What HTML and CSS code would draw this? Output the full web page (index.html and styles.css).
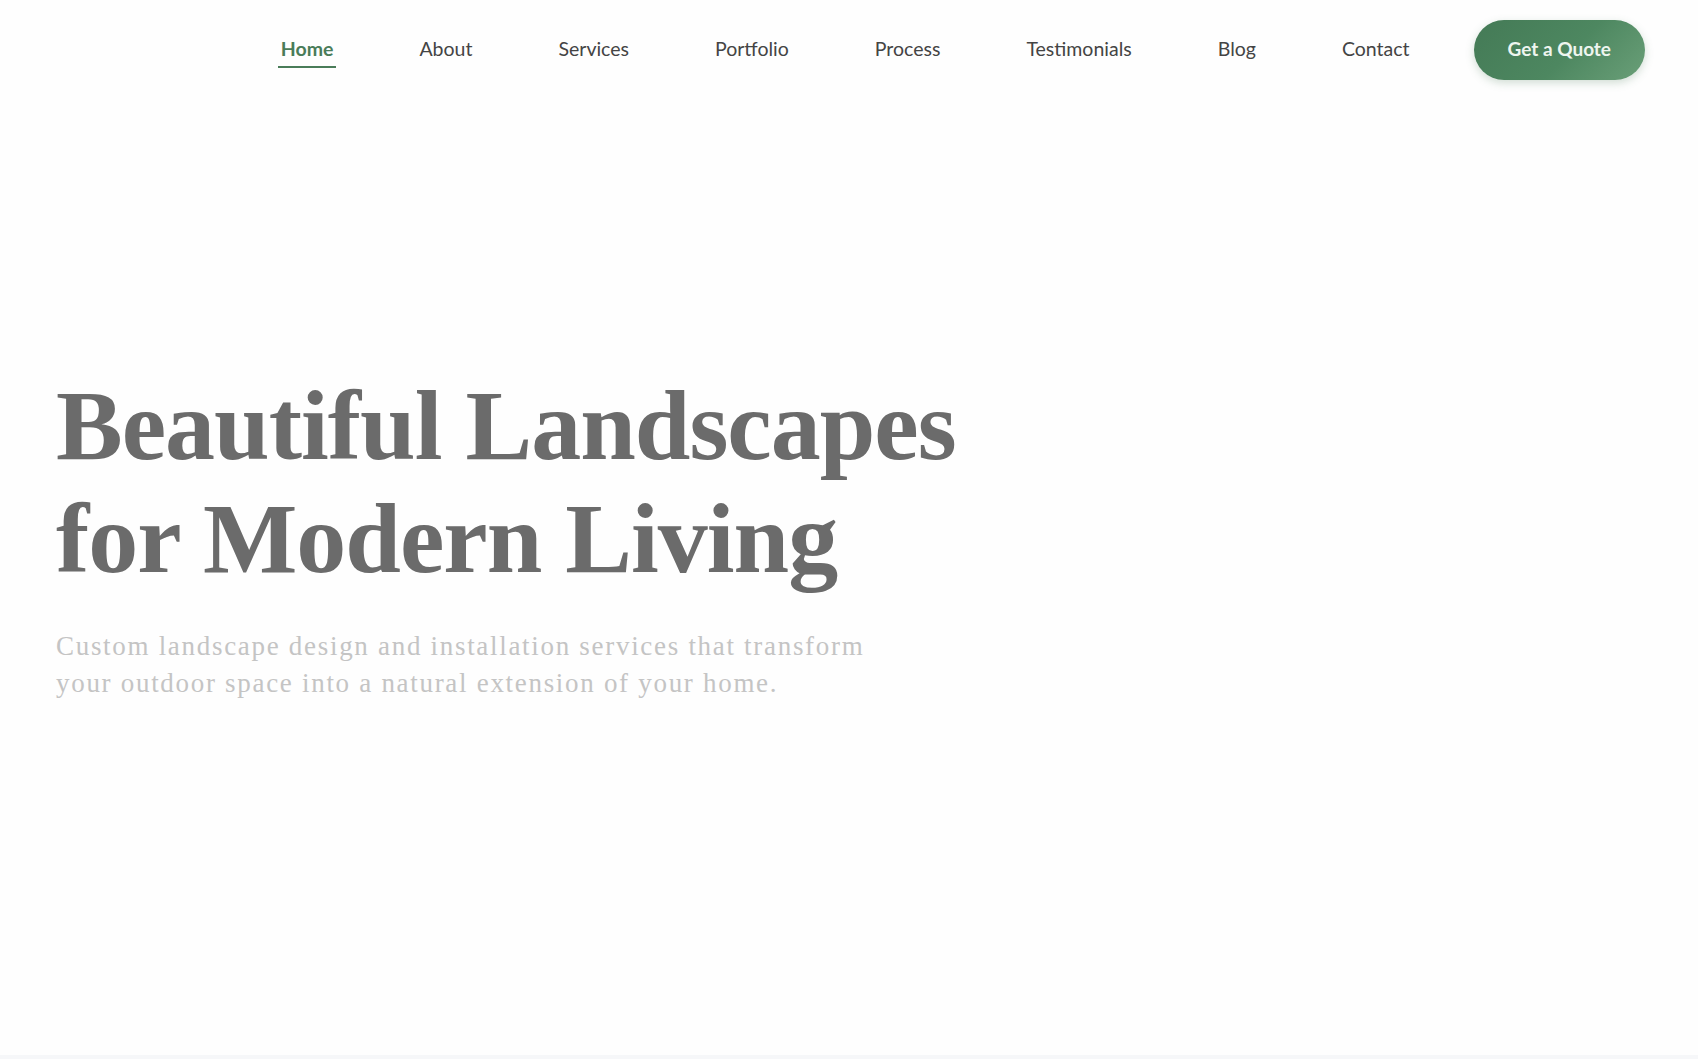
FILE: index.html
```html
<!DOCTYPE html>
<html lang="en">
<head>
<meta charset="utf-8">
<title>Beautiful Landscapes</title>
<link rel="stylesheet" href="styles.css">
</head>
<body>
<header class="site-header">
  <nav class="main-nav">
    <a class="nav-link active" href="#">Home</a>
    <a class="nav-link" href="#">About</a>
    <a class="nav-link" href="#">Services</a>
    <a class="nav-link" href="#">Portfolio</a>
    <a class="nav-link" href="#">Process</a>
    <a class="nav-link" href="#">Testimonials</a>
    <a class="nav-link" href="#">Blog</a>
    <a class="nav-link" href="#">Contact</a>
    <a class="quote-btn" href="#">Get a Quote</a>
  </nav>
</header>
<main class="hero">
  <h1 class="hero-title">Beautiful Landscapes<br>for Modern Living</h1>
  <p class="hero-sub">Custom landscape design and installation services that transform<br>your outdoor space into a natural extension of your home.</p>
</main>
<div class="next-section"></div>
</body>
</html>
```
FILE: styles.css
```css
* { box-sizing: border-box; }
html, body { margin: 0; padding: 0; }
body {
  background: #fefefe;
  height: 1059px;
  overflow: hidden;
  display: flex;
  flex-direction: column;
  font-family: "Lato", "Liberation Sans", sans-serif;
}
.site-header {
  height: 100px;
  display: flex;
  align-items: center;
  justify-content: flex-end;
  padding: 0 53px 0 0;
}
.main-nav {
  display: flex;
  align-items: center;
  gap: 86px;
}
.nav-link {
  position: relative;
  padding-bottom: 4px;
  font-size: 19.5px;
  color: #444444;
  text-decoration: none;
}
.nav-link.active {
  color: #4a7c59;
  font-weight: 700;
}
.nav-link.active::after {
  content: "";
  position: absolute;
  left: -3px;
  right: -3px;
  bottom: -4px;
  height: 2px;
  background: #4a7c59;
}
.quote-btn {
  margin-left: -22px;
  height: 60px;
  padding: 0 34px 3px;
  display: flex;
  align-items: center;
  border-radius: 30px;
  background: linear-gradient(135deg, #447a56 0%, #4d8760 55%, #6a9f78 100%);
  color: #eef5ef;
  font-size: 19px;
  font-weight: 700;
  text-decoration: none;
  box-shadow: 0 3px 8px rgba(74, 124, 89, 0.25);
}
.hero {
  flex: 1;
  padding: 269px 0 0 56px;
}
.hero-title {
  margin: 0;
  font-family: "Liberation Serif", "Times New Roman", serif;
  font-weight: 700;
  font-size: 100px;
  line-height: 113px;
  color: #6b6b6b;
  letter-spacing: -1px;
}
.hero-sub {
  margin: 33px 0 0;
  font-family: "Liberation Serif", "Times New Roman", serif;
  font-size: 27px;
  line-height: 37px;
  color: #c4c4c4;
  letter-spacing: 1.7px;
}
.next-section {
  height: 4px;
  background: #f6f7f9;
}
```
